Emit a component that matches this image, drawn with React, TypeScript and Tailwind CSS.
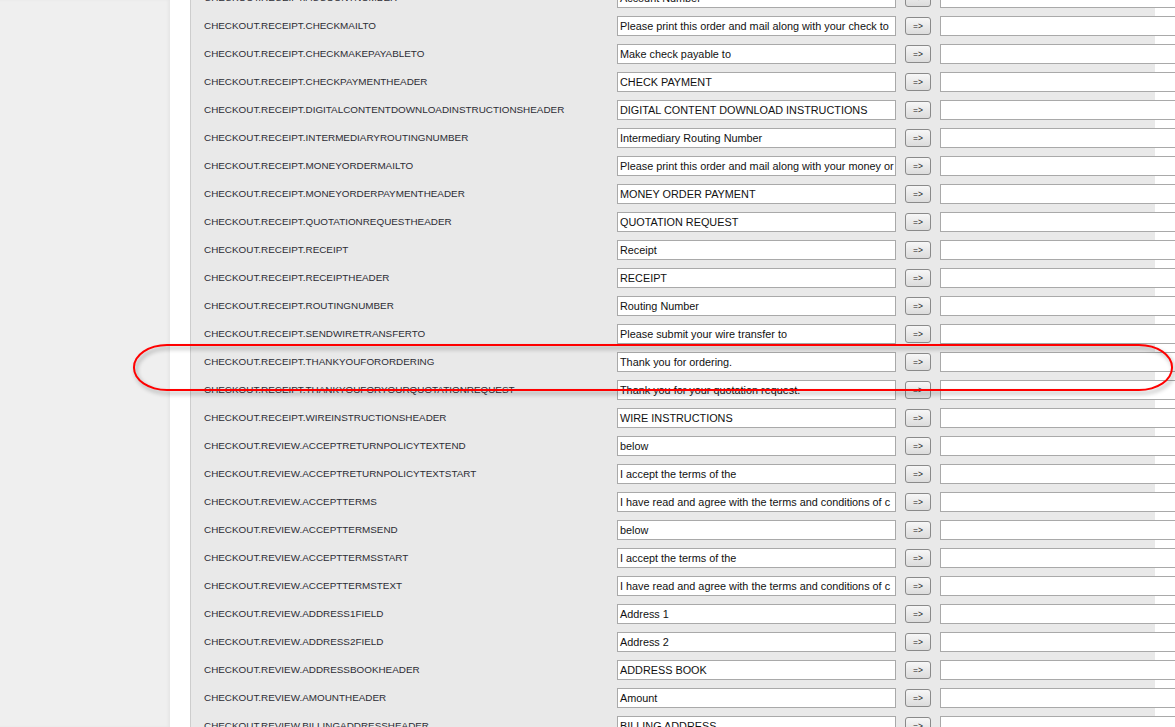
import React from "react";

const rows: [string, string][] = [
  ["CHECKOUT.RECEIPT.ACCOUNTNUMBER", "Account Number"],
  ["CHECKOUT.RECEIPT.CHECKMAILTO", "Please print this order and mail along with your check to"],
  ["CHECKOUT.RECEIPT.CHECKMAKEPAYABLETO", "Make check payable to"],
  ["CHECKOUT.RECEIPT.CHECKPAYMENTHEADER", "CHECK PAYMENT"],
  ["CHECKOUT.RECEIPT.DIGITALCONTENTDOWNLOADINSTRUCTIONSHEADER", "DIGITAL CONTENT DOWNLOAD INSTRUCTIONS"],
  ["CHECKOUT.RECEIPT.INTERMEDIARYROUTINGNUMBER", "Intermediary Routing Number"],
  ["CHECKOUT.RECEIPT.MONEYORDERMAILTO", "Please print this order and mail along with your money or"],
  ["CHECKOUT.RECEIPT.MONEYORDERPAYMENTHEADER", "MONEY ORDER PAYMENT"],
  ["CHECKOUT.RECEIPT.QUOTATIONREQUESTHEADER", "QUOTATION REQUEST"],
  ["CHECKOUT.RECEIPT.RECEIPT", "Receipt"],
  ["CHECKOUT.RECEIPT.RECEIPTHEADER", "RECEIPT"],
  ["CHECKOUT.RECEIPT.ROUTINGNUMBER", "Routing Number"],
  ["CHECKOUT.RECEIPT.SENDWIRETRANSFERTO", "Please submit your wire transfer to"],
  ["CHECKOUT.RECEIPT.THANKYOUFORORDERING", "Thank you for ordering."],
  ["CHECKOUT.RECEIPT.THANKYOUFORYOURQUOTATIONREQUEST", "Thank you for your quotation request."],
  ["CHECKOUT.RECEIPT.WIREINSTRUCTIONSHEADER", "WIRE INSTRUCTIONS"],
  ["CHECKOUT.REVIEW.ACCEPTRETURNPOLICYTEXTEND", "below"],
  ["CHECKOUT.REVIEW.ACCEPTRETURNPOLICYTEXTSTART", "I accept the terms of the"],
  ["CHECKOUT.REVIEW.ACCEPTTERMS", "I have read and agree with the terms and conditions of c"],
  ["CHECKOUT.REVIEW.ACCEPTTERMSEND", "below"],
  ["CHECKOUT.REVIEW.ACCEPTTERMSSTART", "I accept the terms of the"],
  ["CHECKOUT.REVIEW.ACCEPTTERMSTEXT", "I have read and agree with the terms and conditions of c"],
  ["CHECKOUT.REVIEW.ADDRESS1FIELD", "Address 1"],
  ["CHECKOUT.REVIEW.ADDRESS2FIELD", "Address 2"],
  ["CHECKOUT.REVIEW.ADDRESSBOOKHEADER", "ADDRESS BOOK"],
  ["CHECKOUT.REVIEW.AMOUNTHEADER", "Amount"],
  ["CHECKOUT.REVIEW.BILLINGADDRESSHEADER", "BILLING ADDRESS"],
];

export default function App() {
  return (
    <div
      className="relative w-[1175px] h-[727px] overflow-hidden flex bg-white"
      style={{ fontFamily: '"Liberation Sans", Arial, sans-serif' }}
    >
      <div className="w-[170px] shrink-0 bg-[#efefef] shadow-[inset_-2px_0_3px_rgba(0,0,0,0.04)]" />
      <div className="w-[20px] shrink-0 bg-white" />
      <div className="w-[965px] shrink-0 border-l border-[#cdcdcd] bg-[#e9e9e9]">
        <div className="-mt-[16px] flex flex-col">
          {rows.map(([k, v]) => (
            <div key={k} className="h-[28px] flex items-center shrink-0">
              <div className="w-[426px] shrink-0 pl-[13px] text-[9.9px] text-[#2c2c34] whitespace-nowrap overflow-hidden">
                {k}
              </div>
              <div className="w-[279px] h-[20px] shrink-0 bg-white border border-[#a9a9a9] pl-[2px] text-[10.85px] leading-[18px] text-[#111] whitespace-nowrap overflow-hidden">
                {v}
              </div>
              <div className="ml-[9px] w-[26px] h-[18px] shrink-0 rounded-[3px] border border-[#8a8a8a] bg-gradient-to-b from-[#f7f7f7] to-[#dcdcdc] flex items-center justify-center text-[8.5px] text-[#222] leading-none">
                =&gt;
              </div>
              <div className="ml-[9px] w-[400px] h-[20px] shrink-0 bg-white border border-[#a9a9a9]" />
            </div>
          ))}
        </div>
      </div>
      <div className="absolute left-[133px] top-[344px] w-[1040px] h-[47px] rounded-[34px_/_23px] border-2 border-[#ff0000] drop-shadow-[2px_3px_2px_rgba(0,0,0,0.35)] pointer-events-none" />
    </div>
  );
}
